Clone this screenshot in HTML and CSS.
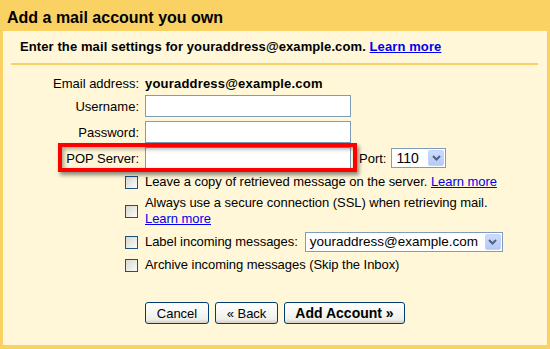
FILE: index.html
```html
<!DOCTYPE html>
<html>
<head>
<meta charset="utf-8">
<link rel="stylesheet" href="styles.css">
</head>
<body>
<div class="dialog">
  <h1 class="title">Add a mail account you own</h1>
  <div class="panel">
    <div class="intro">Enter the mail settings for youraddress@example.com. <a href="#">Learn more</a></div>
    <div class="divider"></div>
    <div class="form">
      <div class="row row-email"><span class="label">Email address:</span><span class="value">youraddress@example.com</span></div>
      <div class="row"><label class="label">Username:</label><input class="text" type="text"></div>
      <div class="row"><label class="label">Password:</label><input class="text" type="password"></div>
      <div class="row row-pop">
        <label class="label">POP Server:</label><input class="text" type="text">
        <span class="port-label">Port:</span>
        <span class="select select-port"><span class="select-value">110</span><span class="select-arrow"><svg width="9" height="6" viewBox="0 0 9 6"><path d="M1 1 L4.5 4.5 L8 1" fill="none" stroke="#4d6185" stroke-width="2"/></svg></span></span>
        <span class="highlight"></span>
      </div>
    </div>
    <div class="options">
      <div class="opt"><span class="check"></span><span class="opt-text">Leave a copy of retrieved message on the server. <a href="#">Learn more</a></span></div>
      <div class="opt"><span class="check"></span><span class="opt-text">Always use a secure connection (SSL) when retrieving mail.<br><a href="#">Learn more</a></span></div>
      <div class="opt opt-label"><span class="check"></span><span class="opt-text">Label incoming messages:</span>
        <span class="select select-label"><span class="select-value">youraddress@example.com</span><span class="select-arrow"><svg width="9" height="6" viewBox="0 0 9 6"><path d="M1 1 L4.5 4.5 L8 1" fill="none" stroke="#4d6185" stroke-width="2"/></svg></span></span>
      </div>
      <div class="opt"><span class="check"></span><span class="opt-text">Archive incoming messages (Skip the Inbox)</span></div>
    </div>
    <div class="buttons">
      <button class="btn btn-cancel">Cancel</button>
      <button class="btn btn-back">« Back</button>
      <button class="btn btn-add">Add Account »</button>
    </div>
  </div>
</div>
</body>
</html>
```
FILE: styles.css
```css
html, body {
  margin: 0;
  padding: 0;
}
body {
  background: #fad163;
  font-family: "Liberation Sans", Arial, sans-serif;
  font-size: 13px;
  color: #000;
}
.dialog {
  width: 550px;
  box-sizing: border-box;
  padding: 0 3px 4px 3px;
}
.title {
  margin: 0;
  height: 31px;
  box-sizing: border-box;
  padding: 8px 0 0 4px;
  font-size: 16px;
  line-height: 19px;
  font-weight: bold;
}
.panel {
  background: #fff7d7;
  padding-bottom: 21px;
}
.intro {
  padding: 8px 0 0 17px;
  line-height: 16px;
  font-weight: bold;
  letter-spacing: 0.1px;
}
a {
  color: #0000ee;
  text-decoration: underline;
}
.divider {
  height: 2px;
  background: #fad163;
  margin: 8px 9px 0 8px;
}
.form {
  padding-top: 11px;
  display: flex;
  flex-direction: column;
}
.row {
  display: flex;
  align-items: center;
  height: 22px;
  margin-top: 4px;
}
.row-email {
  height: 16px;
  line-height: 16px;
  margin-top: 0;
  margin-bottom: -1px;
}
.label {
  width: 136px;
  text-align: right;
  margin-right: 6px;
  flex: none;
}
.value {
  font-weight: bold;
  letter-spacing: 0.2px;
}
.text {
  width: 206px;
  height: 22px;
  box-sizing: border-box;
  border: 1px solid #7f9db9;
  background: #fff;
  margin: 0;
  padding: 1px 3px;
  font: inherit;
}
.row-pop {
  position: relative;
}
.port-label {
  margin-left: 8px;
  margin-right: 5px;
}
.select {
  display: inline-flex;
  align-items: stretch;
  box-sizing: border-box;
  border: 1px solid #7f9db9;
  background: #fff;
  padding: 1px;
}
.select-value {
  flex: 1;
  padding: 0 3px;
  line-height: 16px;
  font-size: 14px;
  white-space: nowrap;
  overflow: hidden;
}
.select-label .select-value {
  font-size: 13.5px;
}
.select-arrow {
  width: 16px;
  flex: none;
  display: flex;
  align-items: center;
  justify-content: center;
  background: linear-gradient(#cddbfb, #b6c8f6);
  border: 1px solid #c3d3fd;
  box-sizing: border-box;
  border-radius: 2px;
}
.select-port {
  width: 55px;
  height: 20px;
}
.highlight {
  position: absolute;
  left: 55px;
  top: -4px;
  width: 299px;
  height: 29px;
  box-sizing: border-box;
  border: 4px solid #ff0000;
  box-shadow: 2px 3px 4px rgba(0,0,0,0.45), inset 2px 2px 4px rgba(0,0,0,0.35);
  pointer-events: none;
}
.options {
  margin: 5px 0 0 122px;
  display: flex;
  flex-direction: column;
  gap: 5px;
}
.opt {
  display: flex;
  align-items: center;
  line-height: 16px;
}
.opt-text {
  letter-spacing: -0.05px;
}
.check {
  width: 13px;
  height: 13px;
  box-sizing: border-box;
  border: 1px solid #1c5180;
  background: linear-gradient(135deg, #d8d8d0, #fbfbf9);
  flex: none;
  margin-right: 7px;
}
.opt-label {
  height: 20px;
}
.opt-label .opt-text {
  margin-right: 7px;
}
.select-label {
  width: 198px;
  height: 20px;
}
.buttons {
  margin: 29px 0 0 142px;
  display: flex;
  gap: 6px;
}
.btn {
  height: 22px;
  box-sizing: border-box;
  border: 1px solid #003c74;
  border-radius: 3px;
  background: linear-gradient(#ffffff, #f0f0ea 80%, #d6d0c5);
  font-family: "Liberation Sans", Arial, sans-serif;
  font-size: 13px;
  color: #000;
  padding: 0;
  margin: 0;
}
.btn-cancel { width: 64px; }
.btn-back { width: 63px; }
.btn-add { width: 121px; font-weight: bold; font-size: 14px; }
```
